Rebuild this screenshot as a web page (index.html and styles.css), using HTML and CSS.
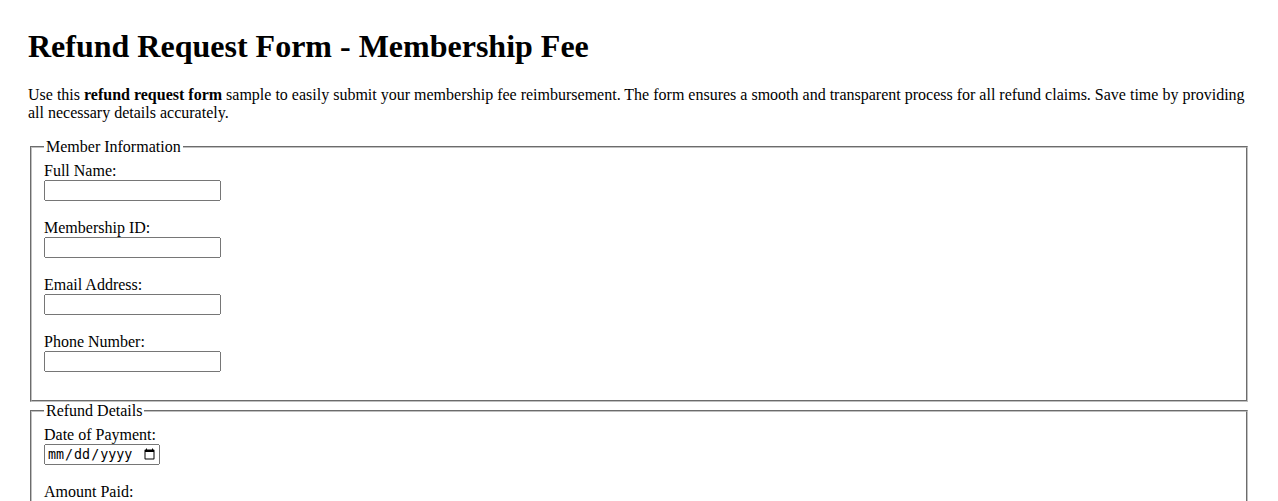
FILE: index.html
```html
<!DOCTYPE html>
<html lang="en">
<head>
<meta charset="utf-8">
<title>Refund Request Form - Membership Fee</title>
<link rel="stylesheet" href="styles.css">
</head>
<body>
<div class="page">
  <h1 class="title">Refund Request Form - Membership Fee</h1>
  <p class="intro">Use this <strong>refund request form</strong> sample to easily submit your membership fee reimbursement. The form ensures a smooth and transparent process for all refund claims. Save time by providing all necessary details accurately.</p>
  <form class="form">
    <fieldset class="group">
      <legend class="legend">Member Information</legend>
      <div class="field">
        <label class="label" for="name">Full Name:</label>
        <input class="input" type="text" id="name">
      </div>
      <div class="field">
        <label class="label" for="mid">Membership ID:</label>
        <input class="input" type="text" id="mid">
      </div>
      <div class="field">
        <label class="label" for="email">Email Address:</label>
        <input class="input" type="email" id="email">
      </div>
      <div class="field">
        <label class="label" for="phone">Phone Number:</label>
        <input class="input" type="tel" id="phone">
      </div>
    </fieldset>
    <fieldset class="group">
      <legend class="legend">Refund Details</legend>
      <div class="field">
        <label class="label" for="date">Date of Payment:</label>
        <input class="date" type="date" id="date">
      </div>
      <div class="field">
        <label class="label" for="amount">Amount Paid:</label>
        <input class="input" type="number" id="amount">
      </div>
      <div class="field">
        <label class="label" for="reason">Reason for Refund:</label>
        <input class="input" type="text" id="reason">
      </div>
    </fieldset>
  </form>
</div>
</body>
</html>
```
FILE: styles.css
```css
html, body {
  margin: 0;
  padding: 0;
  background: #ffffff;
}
body {
  font-family: "Liberation Serif", "Times New Roman", serif;
  font-size: 16px;
  color: #000000;
}
.page {
  padding: 28px;
}
.title {
  font-size: 32px;
  font-weight: bold;
  line-height: 37px;
  margin: 0 0 21px 0;
}
.intro {
  margin: 0 0 16px 0;
  line-height: 18px;
}
.form {
  margin: 0;
}
.group {
  margin: 0 2px;
  padding: 6px 12px 10px 12px;
  border: 2px groove #c0c0c0;
}
.legend {
  padding: 0 2px;
  line-height: 18px;
}
.field {
  display: flex;
  flex-direction: column;
  align-items: flex-start;
  margin-bottom: 18px;
}
.label {
  line-height: 18px;
}
.input {
  box-sizing: border-box;
  width: 177px;
  height: 21px;
  margin: 0;
}
.date {
  box-sizing: border-box;
  width: 116px;
  height: 21px;
  margin: 0;
}
```
